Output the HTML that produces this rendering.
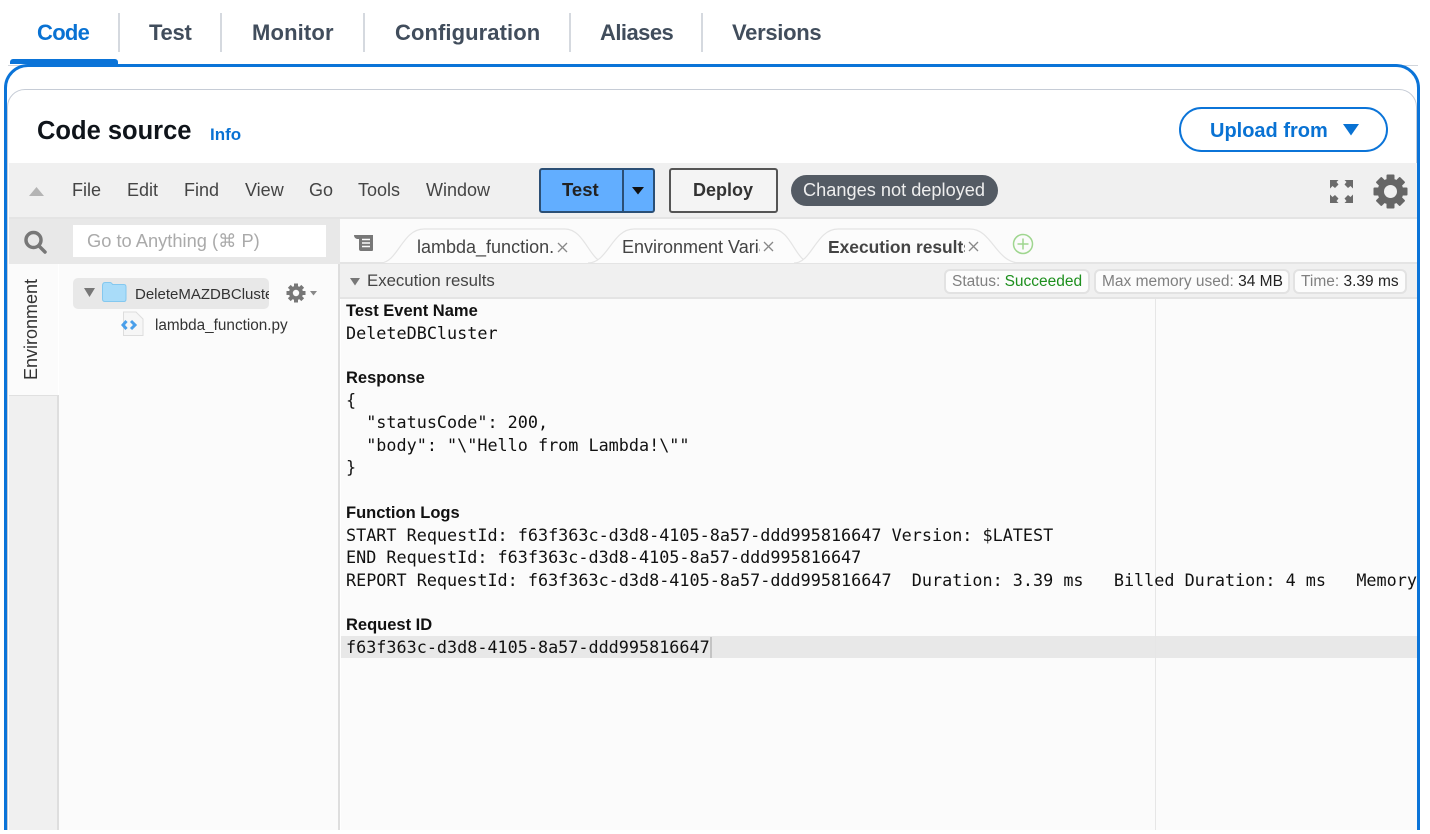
<!DOCTYPE html>
<html><head><meta charset="utf-8"><style>
*{box-sizing:border-box}
html,body{margin:0;padding:0;background:#fff}
#p{position:relative;width:1430px;height:834px;overflow:hidden;background:#fff;font-family:"Liberation Sans",sans-serif}
.a{position:absolute}
.t{position:absolute;white-space:pre;line-height:1}
.tab{font-weight:700;font-size:22px;color:#414d5c;top:22px;font-family:"Liberation Sans",sans-serif}
.sep{position:absolute;top:13px;width:2px;height:39px;background:#d5d9df}
.mn{position:absolute;font-size:18px;color:#444;top:181px;line-height:1;white-space:pre}
.m{position:absolute;left:346px;font:16.8px/22.4px "DejaVu Sans Mono",monospace;color:#111;white-space:pre}
.b{position:absolute;left:346px;font:700 16.5px/22.4px "Liberation Sans",sans-serif;color:#111;white-space:pre}
.chip{position:absolute;top:269px;height:25px;background:#fcfcfc;border:2px solid #e2e2e2;border-radius:6px;font-size:15.5px;line-height:21px;color:#808080;white-space:pre;padding-left:6px}
.chip b{font-weight:400;color:#222}
</style></head><body><div id="p">
<div class="a" style="left:8px;top:65px;width:1410px;height:1px;background:#d1d5db"></div>
<div class="t tab" style="left:37px;color:#0972d3;letter-spacing:-.7px">Code</div>
<div class="sep" style="left:118px"></div>
<div class="t tab" style="left:149px;letter-spacing:-.25px">Test</div>
<div class="sep" style="left:220px"></div>
<div class="t tab" style="left:252px;letter-spacing:.15px">Monitor</div>
<div class="sep" style="left:363px"></div>
<div class="t tab" style="left:395px;letter-spacing:.08px">Configuration</div>
<div class="sep" style="left:569px"></div>
<div class="t tab" style="left:600px;letter-spacing:-.55px">Aliases</div>
<div class="sep" style="left:701px"></div>
<div class="t tab" style="left:732px;letter-spacing:-.3px">Versions</div>

<div class="a" style="left:4px;top:64px;width:1416px;height:800px;border:3px solid #0b74d8;border-radius:24px;background:#fff"></div>
<div class="a" style="left:10px;top:59px;width:108px;height:5px;background:#0b74d8;border-radius:3px 3px 0 0"></div>
<div class="a" style="left:7px;top:89px;width:1410px;height:780px;border:1.5px solid #c6ccd6;border-radius:18px;background:#fff"></div>

<div class="t" style="left:37px;top:119px;font-size:25.5px;font-weight:700;color:#0f141a">Code source</div>
<div class="t" style="left:210px;top:126px;font-size:17px;font-weight:700;color:#0972d3">Info</div>

<div class="a" style="left:1179px;top:107px;width:209px;height:45px;border:2.7px solid #0b74d8;border-radius:23px"></div>
<div class="t" style="left:1210px;top:121px;font-size:20px;font-weight:700;color:#0972d3">Upload from</div>
<svg class="a" style="left:1343px;top:124px" width="16" height="12"><path d="M0 0H16L8 11.500Z" fill="#0972d3"/></svg>

<!-- toolbar -->
<div class="a" style="left:9px;top:163px;width:1408px;height:56px;background:#f0f0f0;border-bottom:2px solid #e4e4e4"></div>
<svg class="a" style="left:29px;top:187px" width="16" height="10"><path d="M0 9H15L7.500 0Z" fill="#b4b4b4"/></svg>
<div class="mn" style="left:72px">File</div>
<div class="mn" style="left:127px">Edit</div>
<div class="mn" style="left:184px">Find</div>
<div class="mn" style="left:245px">View</div>
<div class="mn" style="left:309px">Go</div>
<div class="mn" style="left:358px">Tools</div>
<div class="mn" style="left:426px">Window</div>

<div class="a" style="left:539px;top:168px;width:116px;height:45px;background:#62aeff;border:2px solid #2b4f75;border-radius:3px"></div>
<div class="a" style="left:622px;top:169px;width:1.5px;height:43px;background:#2b4f75"></div>
<div class="t" style="left:562px;top:181px;font-size:18.5px;font-weight:700;color:#222">Test</div>
<svg class="a" style="left:632px;top:187px" width="12" height="8"><path d="M0 0H12L6 7.500Z" fill="#111"/></svg>
<div class="a" style="left:669px;top:168px;width:109px;height:45px;background:#f4f4f4;border:2px solid #555;border-radius:3px"></div>
<div class="t" style="left:693px;top:181px;font-size:18px;font-weight:700;color:#333">Deploy</div>
<div class="a" style="left:791px;top:175px;width:207px;height:31px;background:#545b64;border-radius:16px"></div>
<div class="t" style="left:803px;top:181px;font-size:18.2px;color:#eee">Changes not deployed</div>

<svg class="a" style="left:1329px;top:179px" width="25" height="25" fill="#6a6a6a">
<path d="M1 1H9.500L7.500 3L9.500 5.500L6 9L3.500 7L1 9.500Z"/>
<path d="M24 1H15.500L17.500 3L15.500 5.500L19 9L21.500 7L24 9.500Z"/>
<path d="M1 24H9.500L7.500 22L9.500 19.500L6 16L3.500 18L1 15.500Z"/>
<path d="M24 24H15.500L17.500 22L15.500 19.500L19 16L21.500 18L24 15.500Z"/>
</svg>
<svg class="a" style="left:1373px;top:174px" width="35" height="35" viewBox="-17.500 -17.500 35 35">
<g fill="#666"><circle r="13"/>
<rect x="-4" y="-17" width="8" height="34" rx="1"/>
<rect x="-4" y="-17" width="8" height="34" rx="1" transform="rotate(45)"/>
<rect x="-4" y="-17" width="8" height="34" rx="1" transform="rotate(90)"/>
<rect x="-4" y="-17" width="8" height="34" rx="1" transform="rotate(135)"/></g>
<circle r="6.500" fill="#f0f0f0"/></svg>

<!-- left -->
<div class="a" style="left:9px;top:219px;width:331px;height:45px;background:#e8e8e8"></div>
<svg class="a" style="left:22px;top:229px" width="26" height="26" fill="none" stroke="#777" stroke-width="3.500"><circle cx="11.500" cy="11" r="7.500"/><path d="M17 17L23 23" stroke-linecap="round"/></svg>
<div class="a" style="left:73px;top:225px;width:253px;height:32px;background:#fff"></div>
<div class="t" style="left:87px;top:232px;font-size:18.3px;color:#aaa;font-family:'Liberation Sans','DejaVu Sans',sans-serif">Go to Anything (⌘ P)</div>

<div class="a" style="left:9px;top:264px;width:49px;height:131px;background:#fbfbfb"></div>
<div class="a" style="left:9px;top:395px;width:50px;height:440px;background:#f0f0f0;border-top:1px solid #e0e0e0;border-right:2px solid #dedede"></div>
<div class="t" style="left:22px;top:380px;font-size:18px;color:#333;transform-origin:0 0;transform:rotate(-90deg)">Environment</div>
<div class="a" style="left:59px;top:264px;width:281px;height:570px;background:#fbfbfb;border-right:2px solid #dedede"></div>
<div class="a" style="left:73px;top:278px;width:196px;height:31px;background:#e8e8e8;border-radius:5px"></div>
<svg class="a" style="left:84px;top:288px" width="12" height="10"><path d="M0 0H11L5.500 9Z" fill="#777"/></svg>
<svg class="a" style="left:101px;top:281px" width="26" height="22"><path d="M1.500 5Q1.500 1.500 4 1.500H9Q10.500 1.500 11.500 3.500H23Q25 3.500 25 6V18Q25 20.500 23 20.500H4Q1.500 20.500 1.500 18Z" fill="#a9dcf9" stroke="#84c8ef" stroke-width="1"/></svg>
<div class="a" style="left:135px;top:284px;width:134px;height:20px;overflow:hidden"><div class="t" style="left:0;top:2.500px;font-size:15px;color:#333">DeleteMAZDBCluster</div></div>
<svg class="a" style="left:286px;top:283px" width="20" height="20" viewBox="-10 -10 20 20">
<g fill="#777"><circle r="7"/>
<rect x="-2" y="-9.500" width="4" height="19"/>
<rect x="-2" y="-9.500" width="4" height="19" transform="rotate(45)"/>
<rect x="-2" y="-9.500" width="4" height="19" transform="rotate(90)"/>
<rect x="-2" y="-9.500" width="4" height="19" transform="rotate(135)"/></g>
<circle r="3.200" fill="#fbfbfb"/></svg>
<svg class="a" style="left:310px;top:291px" width="7" height="5"><path d="M0 0H7L3.500 4.500Z" fill="#888"/></svg>
<svg class="a" style="left:120px;top:311px" width="26" height="26" fill="none"><path d="M3.500 1H16L23 8V24.500H3.500Z" fill="#f6f6f6" stroke="#ddd"/><path d="M6.500 10L3 14L6.500 18" stroke="#4a9fea" stroke-width="3"/><path d="M11 10L15 14L11 18" stroke="#4a9fea" stroke-width="3"/></svg>
<div class="t" style="left:155px;top:318px;font-size:15.3px;color:#333">lambda_function.py</div>

<!-- tabs -->
<div class="a" style="left:340px;top:219px;width:1077px;height:45px;background:#fbfbfb;border-bottom:2px solid #e4e4e4"></div>
<svg class="a" style="left:354px;top:234px" width="21" height="18" fill="#777"><path d="M0 1H19V16Q19 17 18 17H7Q5 17 5 15V5H3Q0 4 0 1Z"/><path d="M8 5.500H16M8 9H16M8 12.500H16" stroke="#fbfbfb" stroke-width="1.500"/></svg>
<svg class="a" style="left:380px;top:226px" width="660" height="38" fill="#fcfcfc" stroke="#e4e4e4" stroke-width="1.200">
<path d="M0 37C18 37 22 3 44 3H185C205 3 210 37 226 37"/>
<path d="M208 37C228 37 232 3 254 3H392C412 3 415 37 432 37"/>
<path d="M414 37C432 37 436 3 458 3H590C612 3 616 37 640 37"/>
</svg>
<div class="a" style="left:417px;top:236px;width:137px;height:22px;overflow:hidden"><div class="t" style="left:0;top:2px;font-size:18px;color:#444">lambda_function.py</div></div>
<div class="a" style="left:622px;top:236px;width:138px;height:22px;overflow:hidden"><div class="t" style="left:0;top:2px;font-size:18px;color:#444">Environment Variables</div></div>
<div class="a" style="left:828px;top:236px;width:137px;height:22px;overflow:hidden"><div class="t" style="left:0;top:3px;font-size:17.4px;font-weight:700;color:#444">Execution results</div></div>
<svg class="a" style="left:0;top:0" width="1000" height="260" fill="none" stroke="#888" stroke-width="1.300"><path d="M558 243L567 252M567 243L558 252M764 242L773 251M773 242L764 251M969 242L978 251M978 242L969 251"/></svg>
<svg class="a" style="left:1012px;top:233px" width="22" height="22" fill="none" stroke="#9fd68f" stroke-width="1.500"><circle cx="11" cy="11" r="9.500"/><path d="M11 5.500V16.500M5.500 11H16.500"/></svg>

<!-- exec bar -->
<div class="a" style="left:340px;top:264px;width:1077px;height:35px;background:#f0f0f0;border-bottom:2px solid #e4e4e4"></div>
<svg class="a" style="left:350px;top:278px" width="11" height="8"><path d="M0 0H10L5 7.500Z" fill="#777"/></svg>
<div class="t" style="left:367px;top:273px;font-size:16.8px;color:#444">Execution results</div>
<div class="chip" style="left:944px;width:146px">Status: <b style="color:#1d8f1d">Succeeded</b></div>
<div class="chip" style="left:1094px;width:196px">Max memory used: <b>34 MB</b></div>
<div class="chip" style="left:1293px;width:114px">Time: <b>3.39 ms</b></div>

<!-- content -->
<div class="a" style="left:341px;top:299px;width:1076px;height:535px;background:#fbfbfb;overflow:hidden">
<div class="a" style="left:0;top:337px;width:1076px;height:22px;background:#e8e8e8"></div>
<div class="a" style="left:814px;top:0;width:1px;height:535px;background:#e6e6e6"></div>
</div>
<div class="a" style="left:341px;top:300px;width:1076px;height:400px;overflow:hidden">
<div class="b" style="left:5px;top:0">Test Event Name</div>
<div class="m" style="left:5px;top:22px">DeleteDBCluster</div>
<div class="b" style="left:5px;top:67px">Response</div>
<div class="m" style="left:5px;top:89px">{
  "statusCode": 200,
  "body": "\"Hello from Lambda!\""
}</div>
<div class="b" style="left:5px;top:202px">Function Logs</div>
<div class="m" style="left:5px;top:224px">START RequestId: f63f363c-d3d8-4105-8a57-ddd995816647 Version: $LATEST
END RequestId: f63f363c-d3d8-4105-8a57-ddd995816647
REPORT RequestId: f63f363c-d3d8-4105-8a57-ddd995816647  Duration: 3.39 ms   Billed Duration: 4 ms   Memory Size: 128 MB</div>
<div class="b" style="left:5px;top:314px">Request ID</div>
<div class="m" style="left:5px;top:336px">f63f363c-d3d8-4105-8a57-ddd995816647</div>
<div class="a" style="left:369px;top:337px;width:2px;height:21px;background:#c4c4c4"></div>
</div>
<div class="a" style="left:1417px;top:219px;width:3px;height:615px;background:#0b74d8"></div>
<div class="a" style="left:0;top:830px;width:1430px;height:4px;background:#fff"></div>
</div></body></html>
